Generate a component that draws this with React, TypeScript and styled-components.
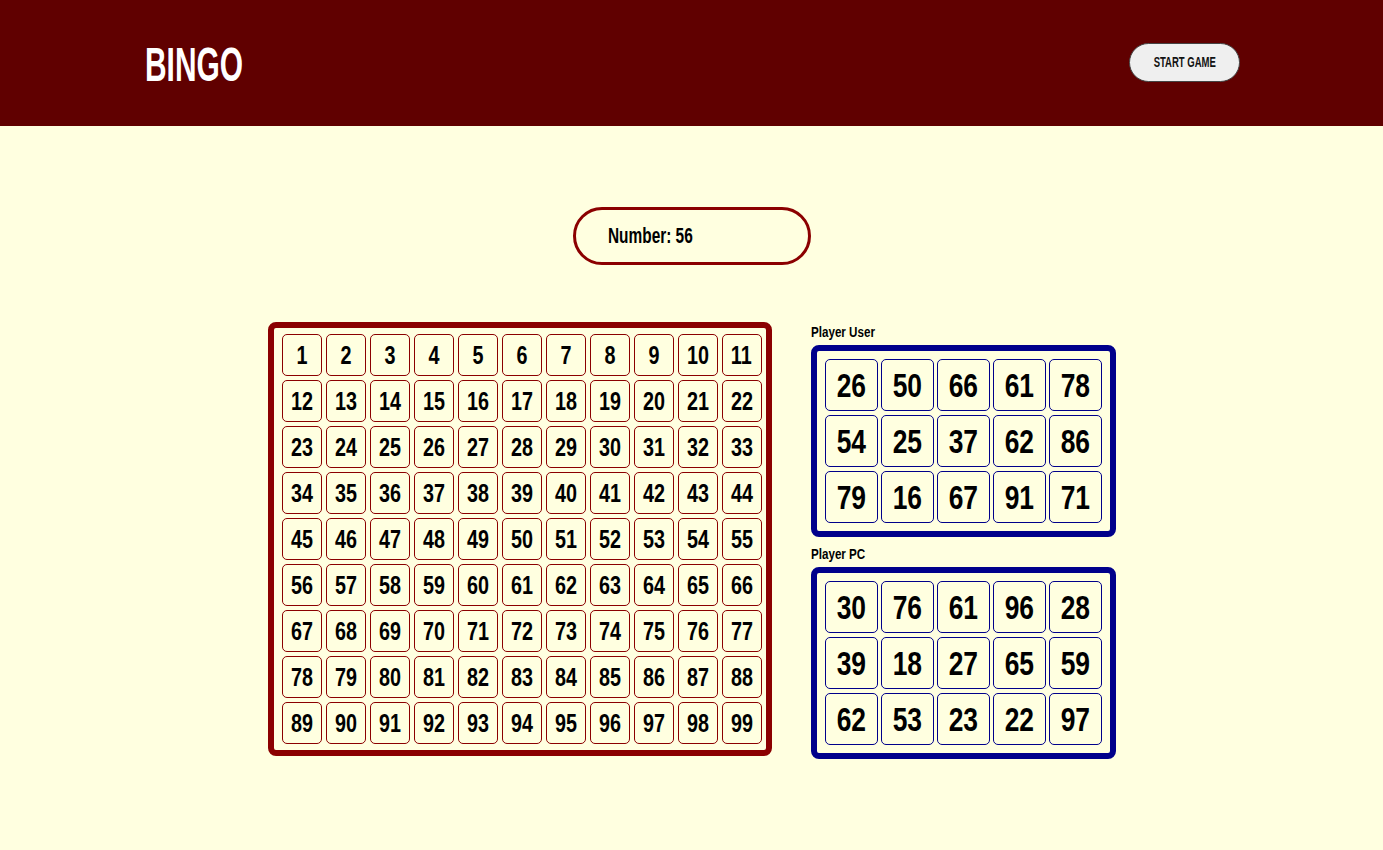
import React from "react";
import styled, { createGlobalStyle } from "styled-components";

const Global = createGlobalStyle`
  html, body {
    margin: 0;
    padding: 0;
    background: #ffffe0;
    font-family: "Liberation Sans", Arial, sans-serif;
    font-weight: 700;
    color: #000;
  }
  * { box-sizing: border-box; }
`;

const Squeeze = styled.span<{ $sx: number; $origin?: string }>`
  display: inline-block;
  white-space: nowrap;
  transform: scaleX(${(p) => p.$sx});
  transform-origin: ${(p) => p.$origin || "center"} center;
`;

const Header = styled.header`
  height: 126px;
  background: #600000;
  display: flex;
  align-items: center;
  justify-content: space-between;
  padding: 0 143px 0 145px;
`;

const Logo = styled.h1`
  margin: 0;
  color: #fff;
  font-size: 49px;
  line-height: 1;
  font-weight: 700;
  margin-top: 3px;
  width: 100px;
`;

const StartButton = styled.button`
  width: 111px;
  height: 39px;
  border-radius: 20px;
  border: 1px solid #444;
  background: #efefef;
  font-family: inherit;
  font-weight: 700;
  font-size: 14px;
  color: #111;
  cursor: pointer;
  margin-top: -2px;
  padding: 0;
  display: flex;
  align-items: center;
  justify-content: center;
`;

const Main = styled.main`
  display: flex;
  flex-direction: column;
  align-items: center;
  padding-top: 81px;
`;

const NumberBox = styled.div`
  width: 238px;
  height: 58px;
  border: 3px solid #8b0000;
  border-radius: 30px;
  display: flex;
  align-items: center;
  padding-left: 32px;
  font-size: 22px;
  margin-bottom: 57px;
`;

const Content = styled.div`
  display: flex;
  align-items: flex-start;
  gap: 39px;
`;

const Board = styled.div<{ $cols: number; $color: string; $w: number; $h: number; $cg: number; $rg: number; $pad: string; $radius: number }>`
  display: grid;
  grid-template-columns: repeat(${(p) => p.$cols}, ${(p) => p.$w}px);
  grid-auto-rows: ${(p) => p.$h}px;
  column-gap: ${(p) => p.$cg}px;
  row-gap: ${(p) => p.$rg}px;
  padding: ${(p) => p.$pad};
  border: 6px solid ${(p) => p.$color};
  border-radius: ${(p) => p.$radius}px;
`;

const Cell = styled.div<{ $color: string; $size: number }>`
  border: 1px solid ${(p) => p.$color};
  border-radius: 5px;
  display: flex;
  align-items: center;
  justify-content: center;
  font-size: ${(p) => p.$size}px;
  line-height: 1;
`;

const Side = styled.div`
  display: flex;
  flex-direction: column;
  width: 305px;
`;

const Label = styled.div`
  font-size: 14px;
  line-height: 20px;
  margin-bottom: 3px;
`;

const CardGap = styled.div`
  height: 7px;
`;

const mainNumbers = Array.from({ length: 99 }, (_, i) => i + 1);
const userCard = [26, 50, 66, 61, 78, 54, 25, 37, 62, 86, 79, 16, 67, 91, 71];
const pcCard = [30, 76, 61, 96, 28, 39, 18, 27, 65, 59, 62, 53, 23, 22, 97];

const PlayerCard: React.FC<{ nums: number[] }> = ({ nums }) => (
  <Board $cols={5} $color="#00008b" $w={53} $h={52} $cg={3} $rg={4} $pad="8px 7px 8px 8px" $radius={8}>
    {nums.map((n, i) => (
      <Cell key={i} $color="#00008b" $size={33}>
        <Squeeze $sx={0.8}>{n}</Squeeze>
      </Cell>
    ))}
  </Board>
);

export default function App() {
  return (
    <>
      <Global />
      <Header>
        <Logo>
          <Squeeze $sx={0.61} $origin="left">BINGO</Squeeze>
        </Logo>
        <StartButton>
          <Squeeze $sx={0.68}>START GAME</Squeeze>
        </StartButton>
      </Header>
      <Main>
        <NumberBox>
          <Squeeze $sx={0.7} $origin="left">Number: 56</Squeeze>
        </NumberBox>
        <Content>
          <Board $cols={11} $color="#8b0000" $w={40} $h={42} $cg={4} $rg={4} $pad="6px 4px 6px 8px" $radius={8}>
            {mainNumbers.map((n) => (
              <Cell key={n} $color="#8b0000" $size={25}>
                <Squeeze $sx={0.79}>{n}</Squeeze>
              </Cell>
            ))}
          </Board>
          <Side>
            <Label>
              <Squeeze $sx={0.83} $origin="left">Player User</Squeeze>
            </Label>
            <PlayerCard nums={userCard} />
            <CardGap />
            <Label>
              <Squeeze $sx={0.83} $origin="left">Player PC</Squeeze>
            </Label>
            <PlayerCard nums={pcCard} />
          </Side>
        </Content>
      </Main>
    </>
  );
}
